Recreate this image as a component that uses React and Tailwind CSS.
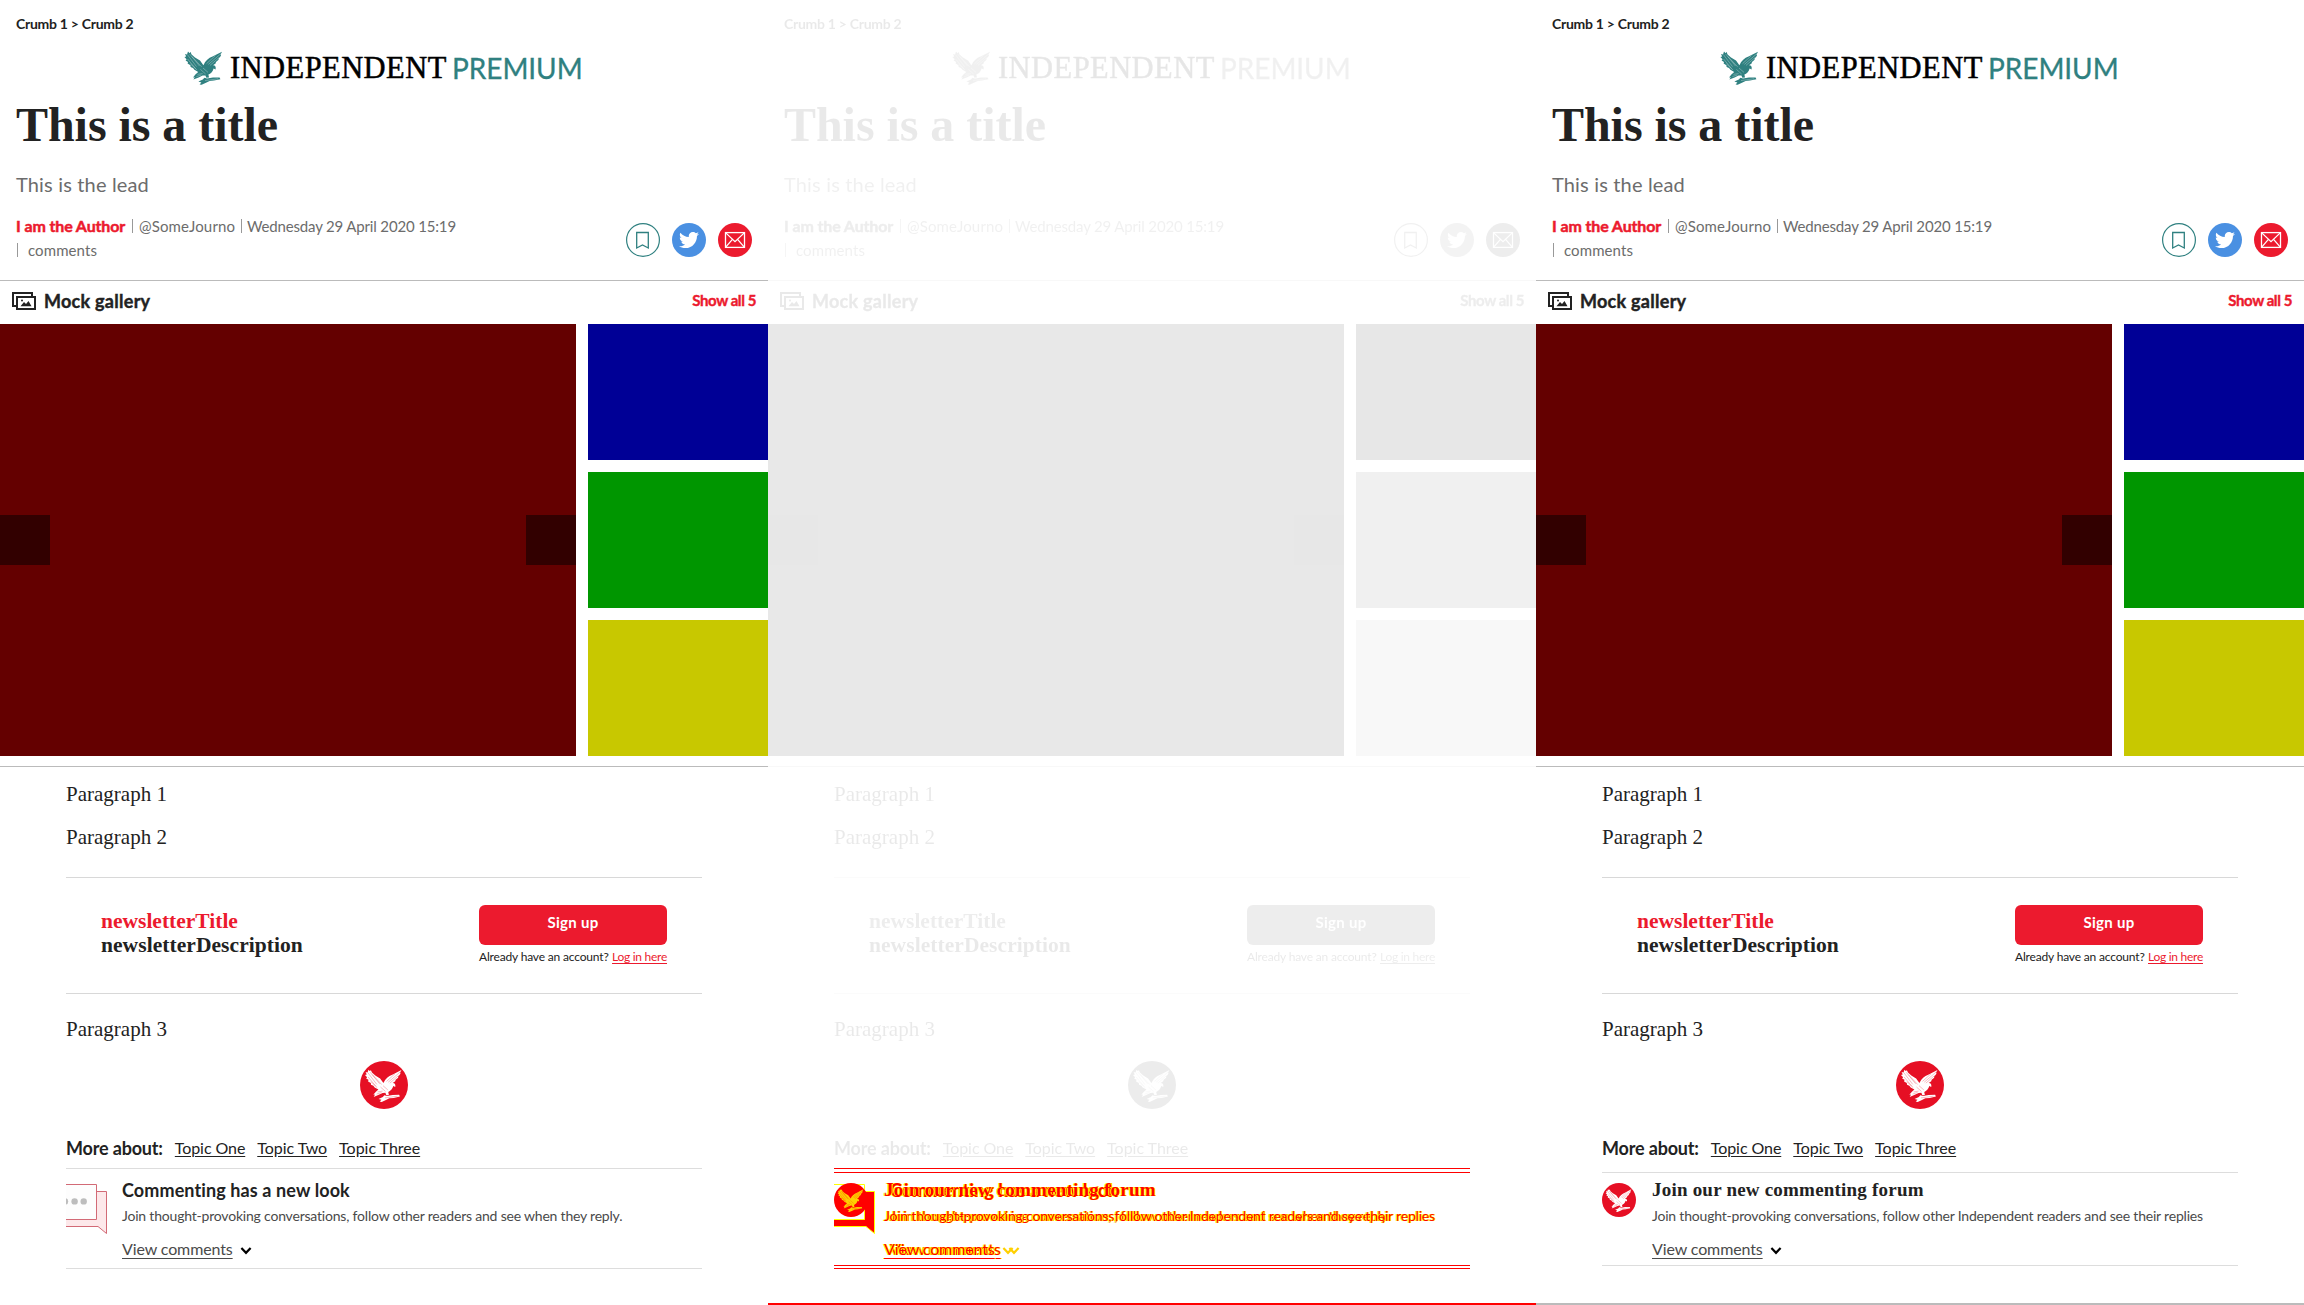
import { FaTwitter } from "react-icons/fa";

function EaglePaths({ fill, detail }) {
  return (
    <g>
      <g fill={fill}>
        <path d="M4 .5 L5.6 2.2 L6.4 .8 L7.6 3.4 L11 6.6 L16 9.5 L19.4 14.2 C21.5 9.5 24.5 7.2 28.5 5.6 L38 .8 L36.6 3.6 L37 4.8 L34.6 7.4 L34.6 8.8 L32 11 L31.6 12.4 L28.6 14.4 C30.8 14 32.2 15.6 31.6 18.4 L29.6 17.4 C28.8 20.6 26.6 22.6 24.4 23.6 L25 26.6 L22.4 26.8 L21.4 24.4 L18.6 24.6 L14.6 26.4 L9.4 28.6 L10.8 26.2 L9 26.4 L11.4 23.4 L14.2 21 L10.4 18.8 L9 17 L6.6 16 L6.4 14.2 L3.6 12.6 L4 11 L1.6 9.6 L2.6 8.2 L.4 6 L2.2 5.4 L1 3 L3 3.4 Z" />
        <path d="M14.4 30.6 L18.8 28.6 L20.4 26.8 L23 27.6 L29 26.6 L35.6 26.4 L36.4 28.2 L30 29.6 L25.6 30 L22 31.8 L17.6 33.8 L15.6 33.4 L17.4 31.6 Z" />
      </g>
      <g stroke={detail} strokeWidth=".45" opacity=".65" fill="none">
        <path d="M3.4 3.6 L12.5 15.6 M5.8 3.2 L15.5 15 M8 5.6 L17.6 15.8 M3.6 8 L11.6 17.6 M6.4 12.8 L13 19 M37 2.6 L24.4 13.4 M35 6.6 L26 14.4 M31.4 4.6 L22.6 12.6 M19 17 L24 21.4 M16.4 18.4 L21.6 23 M13.4 23.4 L18.6 22.6 M12.4 25.6 L17.4 24 M21 29.6 L34 27.8" />
      </g>
    </g>
  );
}

function EagleBadge({ className, fill = "#e60f24", detail = "#ffffff" }) {
  return (
    <svg viewBox="0 0 48 48" className={className}>
      <circle cx="24" cy="24" r="24" fill={fill} />
      <g transform="translate(4.6 8.2) scale(.97)">
        <EaglePaths fill={detail} detail={fill} />
      </g>
    </svg>
  );
}

function BubbleIcon({ diff }) {
  const line = diff ? "#ffff00" : "#d26a76";
  return (
    <svg viewBox="0 0 42 53" className="h-[53px] w-[42px] shrink-0">
      <path d="M-2 8.5 H40.5 V50.5 L32 43.5 H-2 Z" fill={diff ? "#ff0000" : "#fde8ea"} stroke={line} />
      <path d="M-2 1.5 H30.5 V36.5 H-2 Z" fill={diff ? "#ffffff" : "#fdfdfd"} stroke={line} />
      {!diff && (
        <g fill="#bdbdbd">
          <circle cx="-1" cy="18.4" r="3.2" />
          <circle cx="8.6" cy="18.4" r="3.2" />
          <circle cx="17.7" cy="18.4" r="3.2" />
        </g>
      )}
      {diff && <path d="M0 37 H31 V43 H0 Z" fill="#ff0000" />}
    </svg>
  );
}

function GalleryIcon() {
  return (
    <svg viewBox="0 0 24 18" className="h-[18px] w-6" fill="none" stroke="#222" strokeWidth="2">
      <path d="M4 14 H1 V1 H20 V4" />
      <rect x="5" y="5" width="18" height="12" />
      <path d="M8.5 14.2 L12 10 L14 12 L16.5 9 L19.5 14.2 Z" fill="#222" stroke="none" />
      <circle cx="10" cy="8.6" r="1" fill="#222" stroke="none" />
    </svg>
  );
}

function Logo() {
  return (
    <div className="flex h-10 items-center pl-[184px]">
      <svg viewBox="0 0 38 34" className="h-[34px] w-[38px] shrink-0">
        <EaglePaths fill="#2f8080" detail="#ffffff" />
      </svg>
      <span className="ml-[8px] w-[222px] font-['Liberation_Serif',serif] text-[30.5px] leading-10 tracking-[0.45px] text-black [-webkit-text-stroke:0.5px_black]">
        INDEPENDENT
      </span>
      <span className="text-[28px] leading-10 tracking-[-0.05px] text-[#2f8080] [-webkit-text-stroke:0.3px_#2f8080]">PREMIUM</span>
    </div>
  );
}

function Bar() {
  return <span className="h-[14px] w-px bg-[#999]" />;
}

function Byline() {
  return (
    <div className="mt-[6px] flex h-[66px] justify-between pr-4 pl-4">
      <div className="text-[15px] text-[#6c6c6c]">
        <div className="flex h-6 items-center">
          <span className="w-[116px] text-base font-bold tracking-[-0.12px] text-[#ec1a2e] [-webkit-text-stroke:0.5px_#ec1a2e]">I am the Author</span>
          <Bar />
          <span className="ml-[6px] w-[102px] tracking-[0.15px]">@SomeJourno</span>
          <Bar />
          <span className="ml-[5px] tracking-[-0.16px]">Wednesday 29 April 2020 15:19</span>
        </div>
        <div className="flex h-6 items-center pl-[1px]">
          <Bar />
          <span className="ml-[10px] tracking-[0.09px]">comments</span>
        </div>
      </div>
      <div className="mt-[9px] flex gap-3">
        <svg viewBox="0 0 34 34" className="size-[34px]" fill="none" stroke="#2f8080">
          <circle cx="17" cy="17" r="16.4" strokeWidth="1.2" />
          <path d="M10.7 9.5 H22.3 V25 L16.5 22 L10.7 25 Z" strokeWidth="1.3" />
        </svg>
        <span className="flex size-[34px] items-center justify-center rounded-full bg-[#4a90e2]">
          <FaTwitter className="size-5 text-white" />
        </span>
        <svg viewBox="0 0 34 34" className="size-[34px]" fill="none" stroke="#fff" strokeWidth="1.3">
          <circle cx="17" cy="17" r="17" fill="#ec1a2e" stroke="none" />
          <rect x="7.5" y="9.6" width="19" height="14.8" />
          <path d="M7.5 9.6 L17 18.6 L26.5 9.6 M7.5 24.4 L14.4 16.4 M26.5 24.4 L19.6 16.4" />
        </svg>
      </div>
    </div>
  );
}

function Gallery() {
  return (
    <div className="border-y border-[#bbb]">
      <div className="flex h-[43px] items-center justify-between pr-3 pb-1 pl-3">
        <div className="flex items-center gap-2">
          <GalleryIcon />
          <span className="text-lg tracking-[0.27px] font-bold text-[#222] [-webkit-text-stroke:0.4px_#222]">Mock gallery</span>
        </div>
        <span className="text-[15px] font-bold tracking-[-0.42px] text-[#ec1a2e] [-webkit-text-stroke:0.4px_#ec1a2e]">Show all 5</span>
      </div>
      <div className="mb-[10px] flex h-[432px] gap-3">
        <div className="flex w-[576px] items-center justify-between bg-[#640000]">
          <div className="h-[50px] w-[50px] bg-[#320000]" />
          <div className="h-[50px] w-[50px] bg-[#320000]" />
        </div>
        <div className="flex flex-1 flex-col gap-3">
          <div className="flex-1 bg-[#000096]" />
          <div className="flex-1 bg-[#009600]" />
          <div className="flex-1 bg-[#c8c800]" />
        </div>
      </div>
    </div>
  );
}

function Newsletter() {
  return (
    <div className="mt-[26px] flex h-[117px] justify-between border-y border-[#d8d8d8] pr-[35px] pl-[35px]">
      <div className="mt-[31px] font-['Liberation_Serif',serif] text-[21.5px] leading-6 font-bold">
        <div className="text-[#ec1a2e]">newsletterTitle</div>
        <div className="tracking-[0.06px]">newsletterDescription</div>
      </div>
      <div className="mt-[27px] w-[188px]">
        <div className="flex h-10 items-center justify-center rounded-md bg-[#ec1a2e] pb-[5px] text-[15px] font-bold tracking-[0.28px] text-white">
          Sign up
        </div>
        <div className="mt-[3px] flex justify-between text-xs leading-[18px] whitespace-nowrap">
          <span className="tracking-[-0.17px]">Already have an account?</span>
          <span className="tracking-[-0.27px] text-[#ec1a2e] underline underline-offset-2">Log in here</span>
        </div>
      </div>
    </div>
  );
}

function Article() {
  return (
    <div>
      <div className="flex h-12 items-center pl-4 text-sm font-bold tracking-[-0.27px]">Crumb 1 &gt; Crumb 2</div>
      <Logo />
      <h1 className="pl-4 font-['Liberation_Serif',serif] text-[48px] leading-[73px] font-bold tracking-[-0.05px]">
        This is a title
      </h1>
      <p className="-mt-px h-12 pl-4 text-xl leading-[48px] tracking-[0.16px] text-[#6c6c6c]">This is the lead</p>
      <Byline />
      <Gallery />
      <div className="mx-[66px] pt-[14px] font-['Liberation_Serif',serif] text-[21px] leading-[27px]">
        <p>Paragraph 1</p>
        <p className="mt-4">Paragraph 2</p>
        <div className="font-['Lato',sans-serif]">
          <Newsletter />
        </div>
        <p className="mt-[22px]">Paragraph 3</p>
        <EagleBadge className="mx-auto mt-[18px] size-12" />
      </div>
      <div className="mx-[66px] mt-[26px] flex h-[25px] items-center gap-3 text-base">
        <span className="text-lg font-bold tracking-[-0.17px]">More about:</span>
        <span className="tracking-[-0.08px] underline underline-offset-2">Topic One</span>
        <span className="tracking-[-0.04px] underline underline-offset-2">Topic Two</span>
        <span className="tracking-[-0.02px] underline underline-offset-2">Topic Three</span>
      </div>
    </div>
  );
}

function ViewComments({ diff }) {
  return (
    <div className="mt-2 flex h-6 items-center">
      <span className="tracking-[-0.12px] underline underline-offset-[3px]">View comments</span>
      <svg viewBox="0 0 12 8" className="ml-[7px] mt-1 h-2 w-3" fill="none" stroke={diff ? "#ffd000" : "#000000"} strokeWidth="2.2">
        <path d="M1.4 1 L6 5.8 L10.6 1" />
      </svg>
    </div>
  );
}

function NewLook({ diff }) {
  return (
    <div className={diff ? "mt-2 flex h-[101px] border-y border-[#f00] pt-[9px]" : "mt-2 flex h-[101px] border-y border-[#ddd] pt-[9px]"}>
      <div className="mt-[5px] w-14"><BubbleIcon diff={diff} /></div>
      <div className={diff ? "text-[#f00]" : "text-[#4a4a4a]"}>
        <div className={diff ? "text-lg leading-6 font-bold tracking-[0.11px]" : "text-lg leading-6 font-bold tracking-[0.11px] text-[#222]"}>
          Commenting has a new look
        </div>
        <div className="text-sm leading-[27px] tracking-[-0.2px] whitespace-nowrap">
          Join thought-provoking conversations, follow other readers and see when they reply.
        </div>
        <ViewComments diff={diff} />
      </div>
    </div>
  );
}

function Forum({ diff }) {
  return (
    <div className={diff ? "mt-3 flex h-[94px] border-y border-[#f00] pt-[5px]" : "mt-3 flex h-[94px] border-y border-[#ddd] pt-[5px]"}>
      <div className="mt-[5px] w-[50px]">
        {diff ? <EagleBadge className="size-[34px]" fill="#ff0000" detail="#ffd000" /> : <EagleBadge className="size-[34px]" />}
      </div>
      <div className={diff ? "text-[#f00]" : "text-[#4a4a4a]"}>
        <div className={diff ? "font-['Liberation_Serif',serif] text-[19px] leading-6 font-bold tracking-[0.21px]" : "font-['Liberation_Serif',serif] text-[19px] leading-6 font-bold tracking-[0.21px] text-[#222]"}>
          Join our new commenting forum
        </div>
        <div className="text-sm leading-[27px] tracking-[-0.2px] whitespace-nowrap">
          Join thought-provoking conversations, follow other Independent readers and see their replies
        </div>
        <ViewComments diff={diff} />
      </div>
    </div>
  );
}

export default function App() {
  return (
    <div className="grid h-[1305px] w-[2304px] grid-cols-3 overflow-hidden bg-white font-['Lato',sans-serif] text-base text-[#222]">
      <div className="h-[1305px]">
        <Article />
        <div className="mx-[66px]"><NewLook /></div>
      </div>
      <div className="h-[1305px] border-b-2 border-[#f00]">
        <div className="opacity-[0.095] grayscale"><Article /></div>
        <div className="mx-[66px] grid [text-shadow:1px_0_0_#ff0,-1px_0_0_#ff0]">
          <div className="[grid-area:1/1]"><NewLook diff /></div>
          <div className="[grid-area:1/1]"><Forum diff /></div>
        </div>
      </div>
      <div className="h-[1305px] border-b-2 border-[#bbb]">
        <Article />
        <div className="mx-[66px]"><Forum /></div>
      </div>
    </div>
  );
}
